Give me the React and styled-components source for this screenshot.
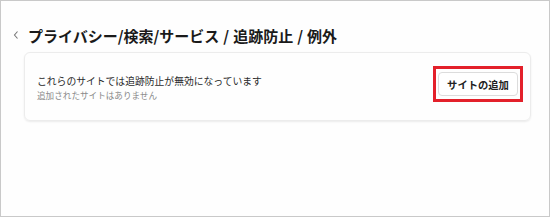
import React from "react";
import styled, { createGlobalStyle } from "styled-components";

const Global = createGlobalStyle`
  html, body { margin: 0; padding: 0; background: #fff; }
  body { font-family: "Noto Sans CJK JP", "Noto Sans", sans-serif; }
`;

const Frame = styled.div`
  box-sizing: border-box;
  width: 550px;
  height: 217px;
  border: 1px solid #c9c9c9;
  background: #fefefe;
  padding: 22px 18px 0 11px;
`;

const Header = styled.div`
  display: flex;
  align-items: center;
  height: 24px;
  gap: 8px;
`;

const Back = styled.svg`
  width: 8px;
  height: 10px;
  flex: none;
`;

const Title = styled.h1`
  margin: 0;
  font-size: 15px;
  font-weight: 700;
  color: #1a1a1a;
  white-space: nowrap;
  letter-spacing: 0;
`;

const Sep = styled.span`
  margin: 0 4px;
  font-weight: 700;
`;

const Card = styled.div`
  box-sizing: border-box;
  margin: 5px 0 0 12px;
  height: 69px;
  border: 1px solid #ececec;
  border-radius: 6px;
  box-shadow: 0 1px 2px rgba(0, 0, 0, 0.08);
  display: flex;
  align-items: center;
  justify-content: space-between;
  padding: 0 7px 0 12px;
`;

const Texts = styled.div`
  display: flex;
  flex-direction: column;
  gap: 1px;
  margin-top: 2px;
`;

const Main = styled.div`
  font-size: 9.8px;
  color: #2a2a2a;
  line-height: 14px;
`;

const Sub = styled.div`
  font-size: 8.6px;
  color: #8a8a8a;
  line-height: 12px;
`;

const Highlight = styled.div`
  border: 3px solid #e3202a;
  padding: 3px 2px;
  display: flex;
  margin-bottom: 5px;
`;

const Button = styled.button`
  box-sizing: border-box;
  width: 80px;
  height: 24px;
  border: 1px solid #dcdcdc;
  border-radius: 4px;
  background: #fff;
  font-family: inherit;
  font-size: 10.3px;
  font-weight: 700;
  color: #222;
  padding: 0;
  cursor: pointer;
`;

export default function App() {
  return (
    <>
      <Global />
      <Frame>
        <Header>
          <Back viewBox="0 0 8 10">
            <path d="M5.5 1.5 L2.5 5 L5.5 8.5" fill="none" stroke="#777" strokeWidth="1.1" />
          </Back>
          <Title>
            プライバシー/検索/サービス<Sep>/</Sep>追跡防止<Sep>/</Sep>例外
          </Title>
        </Header>
        <Card>
          <Texts>
            <Main>これらのサイトでは追跡防止が無効になっています</Main>
            <Sub>追加されたサイトはありません</Sub>
          </Texts>
          <Highlight>
            <Button>サイトの追加</Button>
          </Highlight>
        </Card>
      </Frame>
    </>
  );
}
